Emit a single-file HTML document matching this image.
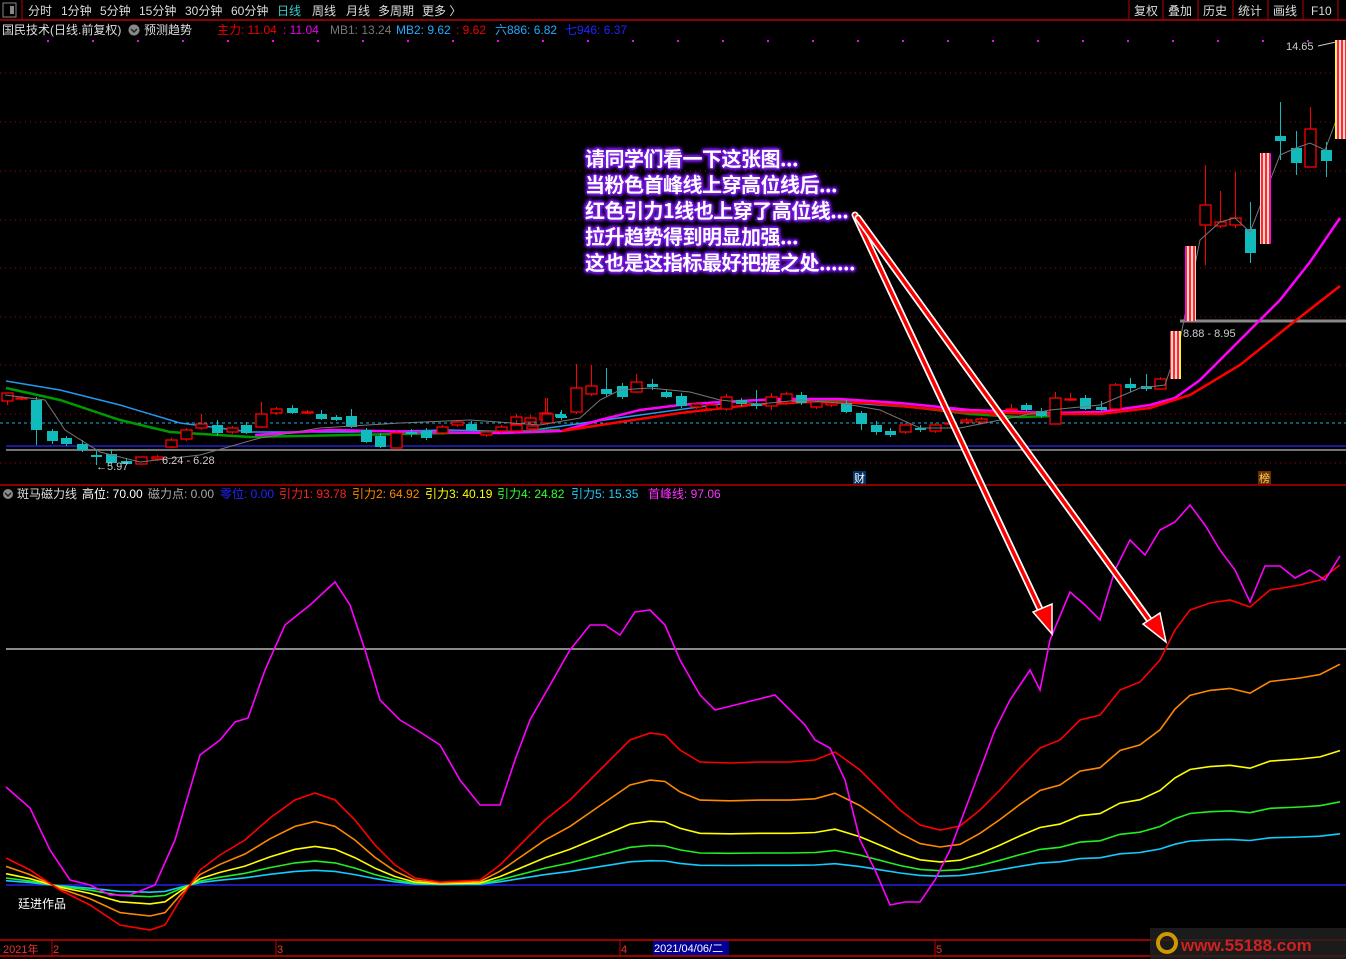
<!DOCTYPE html>
<html><head><meta charset="utf-8"><style>
html,body{margin:0;padding:0;background:#000;width:1346px;height:959px;overflow:hidden;font-family:"Liberation Sans","Noto Sans CJK SC",sans-serif}
svg{position:absolute;left:0;top:0}
.ann{position:absolute;left:585px;font-weight:bold;font-size:20px;color:#fff;line-height:26px;letter-spacing:-0.5px;font-family:"Noto Sans CJK SC","WenQuanYi Zen Hei",sans-serif;
text-shadow:0 0 2px #7a1fe0,0 0 3px #7a1fe0,1px 1px 3px #7a1fe0,-1px -1px 3px #7a1fe0,2px 0 3px #6a10d0,-2px 0 3px #6a10d0,0 2px 3px #6a10d0,0 -2px 3px #6a10d0}
</style></head><body>
<svg id="s" width="1346" height="959" xmlns="http://www.w3.org/2000/svg" font-family="Liberation Sans, Noto Sans CJK SC, sans-serif">
<defs>
<pattern id="st" width="4" height="10" patternUnits="userSpaceOnUse"><rect width="4" height="10" fill="#ff0"/><rect x="1" width="2" height="10" fill="#f0f"/></pattern>
</defs>
<rect x="0" y="0" width="1346" height="20" fill="#000"/>
<line x1="0" y1="20" x2="1346" y2="20" stroke="#b00" stroke-width="1.5"/>
<rect x="3" y="3" width="13" height="14" fill="none" stroke="#888"/><rect x="10" y="6" width="4" height="8" fill="#888"/>
<line x1="22" y1="0" x2="22" y2="20" stroke="#b00"/>
<g font-size="12" fill="#ddd">
<text x="28" y="15">分时</text><text x="61" y="15">1分钟</text><text x="100" y="15">5分钟</text><text x="139" y="15">15分钟</text><text x="185" y="15">30分钟</text><text x="231" y="15">60分钟</text>
<text x="277" y="15" fill="#3cc">日线</text><text x="312" y="15">周线</text><text x="346" y="15">月线</text><text x="378" y="15">多周期</text><text x="422" y="15">更多 〉</text>
<text x="1134" y="15">复权</text><text x="1168" y="15">叠加</text><text x="1203" y="15">历史</text><text x="1238" y="15">统计</text><text x="1273" y="15">画线</text><text x="1311" y="15">F10</text>
</g>
<g stroke="#b00"><line x1="1129" y1="0" x2="1129" y2="20"/><line x1="1163" y1="0" x2="1163" y2="20"/><line x1="1198" y1="0" x2="1198" y2="20"/><line x1="1233" y1="0" x2="1233" y2="20"/><line x1="1268" y1="0" x2="1268" y2="20"/><line x1="1303" y1="0" x2="1303" y2="20"/><line x1="1338" y1="0" x2="1338" y2="20"/></g>
<g font-size="12">
<text x="2" y="34" fill="#ddd">国民技术(日线.前复权)</text>
<circle cx="134" cy="30" r="5.5" fill="#888"/><path d="M131 29l3 3 3-3" stroke="#222" fill="none" stroke-width="1.5"/>
<text x="144" y="34" fill="#ddd">预测趋势</text>
<text x="217" y="34" fill="#e00">主力: 11.04</text><text x="283" y="34" fill="#e0e">: 11.04</text>
<text x="330" y="34" fill="#777">MB1: 13.24</text><text x="396" y="34" fill="#2af">MB2: 9.62</text><text x="456" y="34" fill="#e00">: 9.62</text>
<text x="495" y="34" fill="#2af">六886: 6.82</text><text x="565" y="34" fill="#22f">七946: 6.37</text>
</g>
<g stroke="#a00" stroke-dasharray="1,4">
<line x1="0" y1="73" x2="1346" y2="73"/><line x1="0" y1="122" x2="1346" y2="122"/><line x1="0" y1="171" x2="1346" y2="171"/><line x1="0" y1="220" x2="1346" y2="220"/><line x1="0" y1="268" x2="1346" y2="268"/><line x1="0" y1="317" x2="1346" y2="317"/><line x1="0" y1="365" x2="1346" y2="365"/><line x1="0" y1="414" x2="1346" y2="414"/><line x1="0" y1="463" x2="1346" y2="463"/>
</g>
<g id="mdots" fill="#f0f"></g>
<line x1="0" y1="423" x2="1346" y2="423" stroke="#2ad" stroke-dasharray="3,3"/>
<line x1="6" y1="446" x2="1346" y2="446" stroke="#22c" stroke-width="1.5"/>
<line x1="6" y1="450" x2="1346" y2="450" stroke="#999" stroke-width="1.5"/>
<line x1="1180" y1="321" x2="1346" y2="321" stroke="#888" stroke-width="3"/>
<polyline fill="none" stroke="#29e" stroke-width="1.5" points="6,381 60,390 120,405 180,423 250,432 350,432 450,430 520,432 640,415 750,400 850,403 950,410 1000,412 1050,413 1100,412"/>
<polyline fill="none" stroke="#090" stroke-width="2.5" points="6,388 60,400 120,420 170,432 250,437 400,434 500,432 560,430"/>
<polyline fill="none" stroke="#090" stroke-width="2.5" points="815,400 870,402 920,408 970,414 1020,417 1055,416"/>
<polyline fill="none" stroke="#f0f" stroke-width="2.5" points="255,435 330,430 420,432 500,433 562,431 600,420 640,410 680,405 720,402 780,399 840,399 900,403 970,410 1050,413 1100,412 1150,405 1175,398 1200,380 1240,340 1280,300 1310,262 1340,218"/>
<polyline fill="none" stroke="#f00" stroke-width="2.5" points="562,431 620,422 680,413 750,405 810,402 870,403 960,412 1050,414 1100,414 1150,408 1190,395 1240,365 1290,325 1340,286"/>
<g id="candles"></g>
<polyline fill="none" stroke="#777" stroke-width="1" points="5,395 45,400 65,430 100,452 140,462 200,455 260,438 320,428 400,423 470,420 540,425 580,418 600,400 620,390 650,388 690,392 720,400 760,404 800,400 840,403 880,410 920,428 960,428 1000,420 1050,410 1100,405 1140,388 1165,385 1180,340 1200,240 1220,222 1235,218 1250,232 1280,155 1296,148 1310,143 1325,150 1340,110"/>
<rect x="1170" y="331" width="11" height="48" fill="url(#st)"/>
<rect x="1185" y="246" width="11" height="75" fill="url(#st)"/>
<rect x="1260" y="153" width="11" height="91" fill="url(#st)"/>
<rect x="1335" y="40" width="11" height="99" fill="url(#st)"/>
<g font-size="11" fill="#ccc">
<text x="96" y="470">←5.97</text><text x="162" y="464">6.24 - 6.28</text><text x="1183" y="337">8.88 - 8.95</text><text x="1286" y="50">14.65</text>
</g>
<line x1="1318" y1="46" x2="1336" y2="42" stroke="#ccc"/>
<rect x="853" y="471" width="13" height="13" fill="#036"/><text x="854" y="482" font-size="11" fill="#fff">财</text>
<rect x="1258" y="471" width="13" height="13" fill="#630"/><text x="1259" y="482" font-size="11" fill="#fc6">榜</text>
<line x1="0" y1="485" x2="1346" y2="485" stroke="#b00" stroke-width="1.5"/>
<g font-size="12">
<circle cx="8" cy="494" r="5" fill="#888"/><path d="M5 493l3 3 3-3" stroke="#222" fill="none" stroke-width="1.5"/>
<text x="17" y="498" fill="#ddd">斑马磁力线</text><text x="82" y="498" fill="#fff">高位: 70.00</text><text x="148" y="498" fill="#aaa">磁力点: 0.00</text>
<text x="220" y="498" fill="#22f">零位: 0.00</text><text x="279" y="498" fill="#f22">引力1: 93.78</text><text x="352" y="498" fill="#f80">引力2: 64.92</text>
<text x="425" y="498" fill="#ff0">引力3: 40.19</text><text x="497" y="498" fill="#3f3">引力4: 24.82</text><text x="571" y="498" fill="#2cf">引力5: 15.35</text><text x="648" y="498" fill="#f3f">首峰线: 97.06</text>
</g>
<line x1="6" y1="649" x2="1346" y2="649" stroke="#ddd" stroke-width="1.2"/>
<line x1="6" y1="885" x2="1346" y2="885" stroke="#22e" stroke-width="1.5"/>
<g id="gl" fill="none" stroke-width="1.6"></g>
<polyline fill="none" stroke="#f0f" stroke-width="1.6" points="6,787 30,808 50,850 70,880 90,885 110,895 130,895 155,885 175,840 200,755 220,740 235,722 248,718 265,670 285,625 310,605 335,582 350,605 365,650 380,700 400,720 420,732 440,745 460,780 480,805 500,805 515,760 530,720 550,685 570,650 590,625 605,625 620,635 635,612 650,610 665,625 680,660 700,695 715,710 735,705 755,700 775,695 790,710 805,725 815,740 830,748 845,780 860,840 875,870 890,905 905,902 920,902 935,880 950,850 965,810 980,770 995,730 1010,700 1030,670 1040,690 1050,640 1070,592 1085,605 1100,620 1115,570 1130,540 1145,555 1160,530 1175,522 1190,505 1205,525 1220,550 1235,570 1250,602 1265,566 1280,566 1295,578 1310,570 1325,580 1340,556"/>
<text x="18" y="908" font-size="12" fill="#fff">廷进作品</text>
<g stroke-linecap="round">
<line x1="855" y1="215" x2="1046" y2="622" stroke="#fff" stroke-width="7"/>
<line x1="855" y1="215" x2="1046" y2="622" stroke="#f00" stroke-width="3.5"/>
<line x1="858" y1="218" x2="1158" y2="632" stroke="#fff" stroke-width="7"/>
<line x1="858" y1="218" x2="1158" y2="632" stroke="#f00" stroke-width="3.5"/>
<polygon points="1052,634 1033,612 1052,604" fill="#f00" stroke="#fff" stroke-width="1.5"/>
<polygon points="1166,642 1143,624 1160,613" fill="#f00" stroke="#fff" stroke-width="1.5"/>
</g>
<line x1="0" y1="940" x2="1346" y2="940" stroke="#c00" stroke-width="1.5"/>
<line x1="0" y1="956" x2="1346" y2="956" stroke="#c00" stroke-width="1.5"/>
<g stroke="#c00"><line x1="52" y1="940" x2="52" y2="956"/><line x1="276" y1="940" x2="276" y2="956"/><line x1="620" y1="940" x2="620" y2="956"/><line x1="935" y1="940" x2="935" y2="956"/><line x1="1203" y1="940" x2="1203" y2="956"/></g>
<g font-size="11" fill="#e33"><text x="3" y="953">2021年</text><text x="53" y="953">2</text><text x="277" y="953">3</text><text x="621" y="953">4</text><text x="936" y="953">5</text><text x="1204" y="953">6</text></g>
<rect x="653" y="941" width="76" height="14" fill="#009"/><text x="654" y="952" font-size="11" fill="#fff">2021/04/06/二</text>
<rect x="1150" y="928" width="196" height="31" fill="#222" opacity="0.8"/>
<circle cx="1167" cy="943" r="9" fill="none" stroke="#c90" stroke-width="4"/>
<text x="1181" y="951" font-size="17" font-weight="bold" fill="#c22">www.55188.com</text>
</svg>
<div class="ann" style="top:145px">请同学们看一下这张图...<br>当粉色首峰线上穿高位线后...<br>红色引力1线也上穿了高位线...<br>拉升趋势得到明显加强...<br>这也是这指标最好把握之处......</div>
<script>
var NS="http://www.w3.org/2000/svg";
function el(p,t,a){var e=document.createElementNS(NS,t);for(var k in a)e.setAttribute(k,a[k]);p.appendChild(e);return e;}
var md=document.getElementById('mdots');
for(var x=32;x<1346;x+=15){if(((x*7)%45)<20)el(md,'rect',{x:x,y:40,width:2,height:2});}
var A=[[5,393,401,393,405,1],[16,398,399,396,400,1],[27,400,429,397,445,0],[39,431,440,429,444,0],[49,438,443,436,446,0],[61,444,449,440,452,0],[72,455,456,450,465,0],[83,454,462,449,465,0],[94,461,463,458,465,0],[105,457,464,457,465,1],[117,457,459,455,461,1],[128,440,447,438,448,1],[139,430,439,428,441,1],[150,424,428,414,430,1],[162,425,432,420,436,0],[173,428,432,426,434,1],[184,425,432,422,434,0],[195,414,427,402,428,1],[206,409,413,407,415,1],[218,408,412,405,414,0],[229,412,413,410,414,1],[240,414,418,410,420,0],[251,417,419,415,421,0],[262,416,426,409,428,0],[273,430,441,428,443,0],[284,436,446,433,448,0],[296,433,448,430,448,1],[307,432,433,429,437,0],[318,431,437,428,440,0],[330,427,433,425,435,1],[341,422,425,420,427,1],[352,424,429,421,431,0],[363,432,435,430,437,1],[374,427,431,425,433,1],[385,417,424,414,426,1],[396,418,422,415,424,1],[407,413,420,398,422,1],[418,414,416,412,418,0]];
var B=[[515,425,431,420,433,1],[530,426,429,424,431,1],[544,414,423,398,425,1],[557,416,417,410,420,0],[571,388,412,364,414,1],[585,386,394,365,396,1],[599,389,393,368,396,0],[614,386,396,383,399,0],[627,382,392,374,393,1],[642,384,386,379,390,0],[655,392,396,390,398,0],[669,396,405,393,408,0],[683,404,407,402,409,1],[697,405,409,403,411,1],[711,397,409,394,411,1],[725,400,403,398,406,0],[739,404,405,390,409,0],[753,397,406,393,410,1],[767,394,403,392,405,1],[781,395,402,392,405,0],[795,402,407,400,409,1],[809,403,405,401,407,1],[823,403,411,400,413,0],[837,413,423,411,430,0],[851,425,431,421,435,0],[864,431,434,428,437,0],[878,425,432,423,434,1],[892,428,429,425,432,0],[906,425,431,423,433,1],[920,423,424,420,426,1],[935,420,422,418,424,1],[949,419,422,417,424,1],[962,414,415,411,417,1]];
var D=[[1011,409,410,404,411,1],[1026,405,409,403,411,0],[1041,411,415,408,418,0],[1055,398,424,392,424,1],[1070,399,400,393,401,1],[1085,398,408,395,410,0],[1101,407,409,401,411,0],[1115,385,409,383,409,1],[1130,384,387,378,392,0],[1146,386,388,374,391,0],[1160,379,389,377,389,1],[1205,205,225,165,265,1],[1220,222,226,191,228,1],[1235,218,225,172,228,1],[1250,229,252,202,263,0],[1280,136,140,102,160,0],[1296,148,162,131,175,0],[1310,129,167,107,167,1],[1326,150,160,142,177,0]];
A.forEach(function(c){c[0]=Math.round(c[0]*3/2.24);});
B.forEach(function(c){c[0]=Math.round(500+(c[0]-500)*3/2.8);});
var C=A.concat(B,D);
var g=document.getElementById('candles');
C.forEach(function(c){var col=c[5]?'#f00':'#1bb';el(g,'line',{x1:c[0]+.5,y1:c[3],x2:c[0]+.5,y2:c[4],stroke:col});
var h=Math.max(1,c[2]-c[1]);if(c[5])el(g,'rect',{x:c[0]-5,y:c[1],width:11,height:h,fill:'#000',stroke:col,'stroke-width':1.3});else el(g,'rect',{x:c[0]-5,y:c[1],width:11,height:h+1,fill:col});});
var red="6,858 30,870 60,890 90,905 120,925 150,930 165,925 180,900 200,870 220,855 245,840 270,818 295,800 315,793 335,800 355,820 375,845 395,865 415,878 440,882 480,880 500,865 520,845 545,820 570,800 600,770 630,740 650,733 665,735 680,750 700,762 730,763 760,762 790,762 815,760 835,752 860,770 880,790 900,810 920,825 940,830 960,826 980,810 1000,790 1020,768 1040,748 1060,740 1080,720 1100,715 1120,690 1140,682 1160,660 1175,630 1190,610 1210,603 1230,600 1250,607 1270,590 1300,585 1320,580 1340,565";
var pts=red.split(' ').map(function(p){return p.split(',').map(Number);});
var gl=document.getElementById('gl');
[[0.16,'#1cf'],[0.26,'#2e2'],[0.42,'#ff0'],[0.69,'#f80'],[1,'#f00']].forEach(function(L){
el(gl,'polyline',{points:pts.map(function(p){return p[0]+','+(885-(885-p[1])*L[0]).toFixed(1);}).join(' '),stroke:L[1]});});
</script>
</body></html>
